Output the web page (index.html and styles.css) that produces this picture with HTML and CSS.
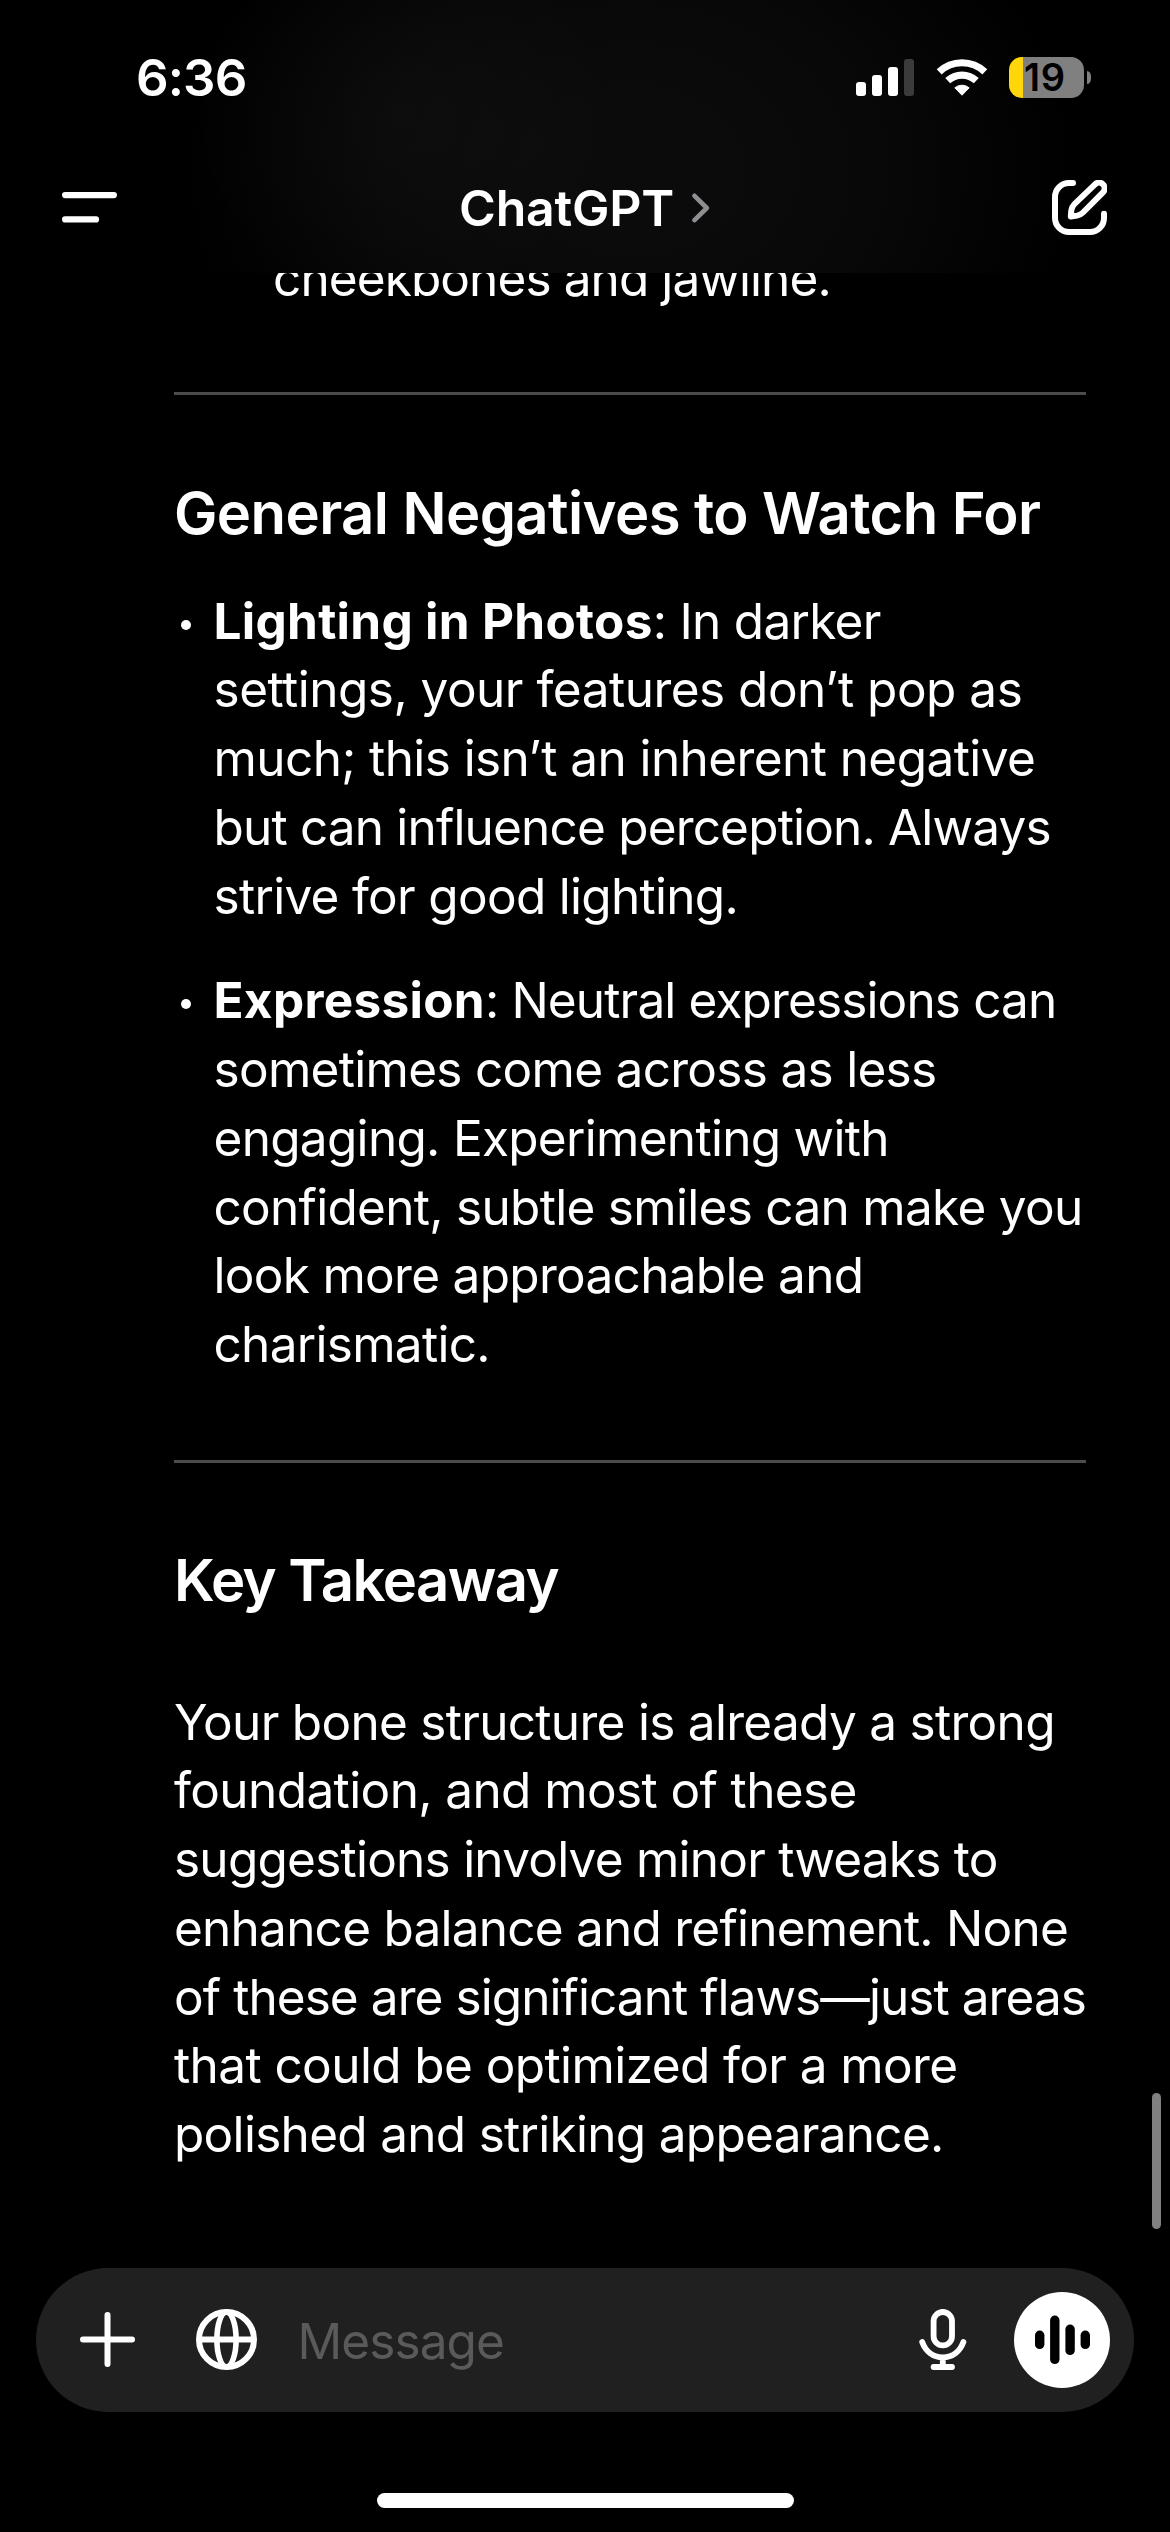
FILE: index.html
```
<!DOCTYPE html>
<html lang="en">
<head>
<meta charset="utf-8">
<title>ChatGPT</title>
<link rel="stylesheet" href="styles.css">
</head>
<body>
<div class="screen">
  <header class="header">
    <div class="status">
      <span class="clock">6:36</span>
      <div class="indicators">
        <svg class="signal" width="58" height="37" viewBox="0 0 58 37" fill="#fff">
          <rect x="0" y="23" width="10" height="14" rx="3"/>
          <rect x="16" y="16" width="10" height="21" rx="3"/>
          <rect x="32" y="8" width="10" height="29" rx="3"/>
          <rect x="48" y="0" width="10" height="37" rx="3" fill="#3b3b3b"/>
        </svg>
        <svg class="wifi" width="52" height="38" viewBox="-26 -37 52 38">
          <g fill="none" stroke="#fff" stroke-width="7.2">
            <path d="M-22.8 -24.2A33.2 33.2 0 0 1 22.8 -24.2"/>
            <path d="M-14.3 -15.3A20.9 20.9 0 0 1 14.3 -15.3"/>
          </g>
          <path d="M-7.2 -8.2A11.2 11.2 0 0 1 7.2 -8.2L0 -.8Z" fill="#fff" stroke="#fff" stroke-width="1" stroke-linejoin="round"/>
        </svg>
        <div class="battery"><div class="battery-body"><span>19</span></div><div class="battery-nub"></div></div>
      </div>
    </div>
    <nav class="nav">
      <svg width="55" height="31" viewBox="0 0 55 31" stroke="#fff" stroke-width="6.2" stroke-linecap="round"><path d="M3.1 3.1H51.9M3.1 27.4H34"/></svg>
      <div class="title">
        <h1>ChatGPT</h1>
        <svg width="18" height="30" viewBox="0 0 18 30" fill="none" stroke="#8e8e93" stroke-width="4.6" stroke-linecap="round" stroke-linejoin="round"><path d="M2.5 2.8L14.8 15L2.5 27.2"/></svg>
      </div>
      <svg width="55" height="55" viewBox="0 0 55 55" fill="none" stroke="#fff" stroke-width="6" stroke-linecap="round" stroke-linejoin="round">
        <path d="M21 3H17A14 14 0 0 0 3 17V38A14 14 0 0 0 17 52H38A14 14 0 0 0 52 38V33.7"/>
        <path d="M43 4.3A5.6 5.6 0 0 1 51 12.3L31 32.5Q28.5 35 25 35.6L18.8 36.5L19.3 30.5Q19.7 26.8 22.5 24Z"/>
      </svg>
    </nav>
  </header>

  <main class="article">
    <p class="tail">cheekbones and jawline.</p>
    <hr>
    <h2>General Negatives to Watch For</h2>
    <ul>
      <li class="lighting">
        <span class="line"><strong>Lighting in Photos</strong>: In darker</span>
        <span class="line">settings, your features don’t pop as</span>
        <span class="line">much; this isn’t an inherent negative</span>
        <span class="line">but can influence perception. Always</span>
        <span class="line">strive for good lighting.</span>
      </li>
      <li class="expression">
        <span class="line"><strong>Expression</strong>: Neutral expressions can</span>
        <span class="line">sometimes come across as less</span>
        <span class="line">engaging. Experimenting with</span>
        <span class="line">confident, subtle smiles can make you</span>
        <span class="line">look more approachable and</span>
        <span class="line">charismatic.</span>
      </li>
    </ul>
    <hr>
    <h2 class="takeaway-title">Key Takeaway</h2>
    <p class="takeaway">
      <span class="line">Your bone structure is already a strong</span>
      <span class="line">foundation, and most of these</span>
      <span class="line">suggestions involve minor tweaks to</span>
      <span class="line">enhance balance and refinement. None</span>
      <span class="line">of these are significant flaws—just areas</span>
      <span class="line">that could be optimized for a more</span>
      <span class="line">polished and striking appearance.</span>
    </p>
  </main>
  <div class="scrollbar"></div>

  <footer class="footer">
    <div class="composer">
      <svg width="55" height="55" viewBox="0 0 55 55" stroke="#fff" stroke-width="6" stroke-linecap="round"><path d="M27.5 3V52M3 27.5H52"/></svg>
      <svg class="globe" width="61" height="61" viewBox="0 0 61 61" fill="none" stroke="#fff" stroke-width="6">
        <circle cx="30.5" cy="30.5" r="27.5"/><ellipse cx="30.5" cy="30.5" rx="9.6" ry="27.5" stroke-width="5.6"/><path d="M3 30.5H58"/>
      </svg>
      <span class="placeholder">Message</span>
      <svg class="mic" width="48" height="61" viewBox="0 0 48 61" fill="none" stroke="#fff" stroke-width="5.8" stroke-linecap="round">
        <rect x="14.6" y="3" width="18.4" height="33.4" rx="9.2"/>
        <path d="M3.2 33C6.5 42.2 14 48.3 23.8 48.3S41.1 42.2 44.4 33M23.8 48.5V58M14.6 58H33"/>
      </svg>
      <div class="voice">
        <svg width="55" height="50" viewBox="0 0 55 50" fill="#000">
          <rect x="0" y="15.5" width="9.4" height="18.6" rx="4.7"/><rect x="15.1" y=".5" width="9.4" height="48.6" rx="4.7"/><rect x="30.4" y="9.5" width="9.4" height="30.6" rx="4.7"/><rect x="45.6" y="15.5" width="9.4" height="18.6" rx="4.7"/>
        </svg>
      </div>
    </div>
    <div class="home"></div>
  </footer>
</div>
</body>
</html>
```
FILE: styles.css
```
* { box-sizing: border-box; margin: 0; padding: 0; }
body { background: #000; }
svg { display: block; flex: none; }

.screen {
  position: relative;
  display: flex;
  flex-direction: column;
  width: 1170px;
  height: 2532px;
  overflow: hidden;
  background: #000;
  color: #fff;
  font-family: Inter, "Liberation Sans", sans-serif;
}

/* Header */
.header {
  position: relative;
  z-index: 1;
  flex: none;
  height: 273px;
  background:
    radial-gradient(ellipse 220px 200px at 400px 115px, rgba(255, 255, 255, .018), transparent),
    radial-gradient(ellipse 450px 340px at 630px 170px, #0b0b0b 20%, #080808 55%, #000);
}
.status {
  display: flex;
  justify-content: space-between;
  height: 156px;
  padding: 47px 79px 0 136px;
}
.clock { font-size: 51px; font-weight: 600; line-height: 62px; letter-spacing: -.9px; }
.indicators { display: flex; align-items: flex-start; }
.signal { margin-top: 12px; }
.wifi { margin: 12px 0 0 21.5px; }
.battery { display: flex; align-items: center; gap: 3px; margin: 10px 0 0 21.5px; }
.battery-body {
  width: 75px;
  height: 41px;
  padding-left: 15px;
  border-radius: 13px;
  background: linear-gradient(90deg, #ffd60a 14px, #808080 14px);
  color: #000;
  font-size: 38px;
  font-weight: 600;
  line-height: 41px;
  letter-spacing: .8px;
}
.battery-nub { width: 4px; height: 13px; border-radius: 0 5px 5px 0 / 0 6.5px 6.5px 0; background: #808080; }
.nav {
  display: flex;
  align-items: center;
  justify-content: space-between;
  height: 103px;
  padding: 0 63px 0 62px;
}
.title { display: flex; align-items: center; gap: 18px; }
.title h1 { font-size: 50px; font-weight: 600; line-height: 62px; letter-spacing: -.25px; }

/* Conversation */
.article {
  flex: none;
  height: 1995px;
  margin-top: -29.4px;
  padding: 0 84px 0 174px;
  font-size: 49.5px;
  line-height: 68.75px;
  letter-spacing: -.7px;
  white-space: nowrap;
}
.line { display: block; }
.tail { padding-left: 99px; letter-spacing: -.9px; }
hr { height: 3px; border: 0; background: #4c4c4c; margin-top: 79.6px; }
h2 { margin-top: 83px; font-size: 58px; font-weight: 600; line-height: 70px; letter-spacing: -.58px; }
ul { list-style: none; margin-top: 38.6px; }
li { position: relative; padding-left: 39.5px; }
li::before {
  content: "";
  position: absolute;
  left: 7px;
  top: 33px;
  width: 10px;
  height: 10px;
  border-radius: 50%;
  background: #fff;
}
li + li { margin-top: 36.2px; }
strong { font-weight: 700; letter-spacing: .3px; }
ul + hr { margin-top: 81px; }
.takeaway-title { margin-top: 82px; letter-spacing: -1.55px; }
.takeaway { margin-top: 72.6px; }

/* Tracking per line, so each one ends at its measure */
.lighting .line:nth-child(2) { letter-spacing: -.5px; }
.lighting .line:nth-child(3) { letter-spacing: -.58px; }
.lighting .line:nth-child(4) { letter-spacing: -.82px; }
.expression .line:nth-child(1) { letter-spacing: -.86px; }
.takeaway .line:nth-child(2) { letter-spacing: -.6px; }
.takeaway .line:nth-child(3) { letter-spacing: -.76px; }
.takeaway .line:nth-child(4) { letter-spacing: -.76px; }
.takeaway .line:nth-child(5) { letter-spacing: -.93px; }
.takeaway .line:nth-child(6) { letter-spacing: -.59px; }

.scrollbar {
  position: absolute;
  left: 1152px;
  top: 2093px;
  width: 9px;
  height: 136px;
  border-radius: 5px;
  background: #808080;
}

/* Composer */
.footer { flex: 1; margin-top: 29.4px; padding: 0 36px; }
.composer {
  display: flex;
  align-items: center;
  height: 144px;
  padding: 0 24px 1px 44px;
  border-radius: 72px;
  background: #202020;
}
.globe { margin-left: 61px; }
.placeholder {
  flex: 1;
  margin-left: 40.5px;
  padding-top: 3px;
  color: #5a5a5a;
  font-size: 49.5px;
  line-height: 62px;
  letter-spacing: -.9px;
}
.voice {
  display: flex;
  align-items: center;
  justify-content: center;
  width: 96px;
  height: 96px;
  margin-left: 47px;
  border-radius: 50%;
  background: #fff;
}
.home { width: 417px; height: 15px; margin: 81px auto 0; border-radius: 8px; background: #fff; }
```
